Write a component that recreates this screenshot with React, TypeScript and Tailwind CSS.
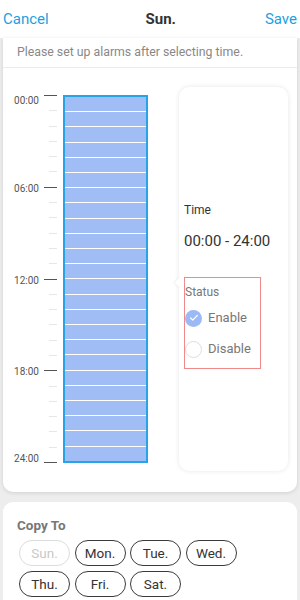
import { Check } from 'lucide-react'

const HOUR = 367 / 24
const days = ['Sun.', 'Mon.', 'Tue.', 'Wed.', 'Thu.', 'Fri.', 'Sat.']

function Axis() {
  const ticks = Array.from({ length: 25 }, (_, i) => i)
  return (
    <div className="relative w-[60px] h-[368px] shrink-0">
      {ticks.map((i) => {
        const major = i % 6 === 0
        const top = i * HOUR
        return (
          <div key={i}>
            <div
              className={major ? 'absolute left-[41px] w-[13px] h-px bg-[#555]' : 'absolute left-[46px] w-[8px] h-px bg-[#e6e6e6]'}
              style={{ top }}
            />
            {major && (
              <span
                className="absolute right-[24px] text-[10px] leading-[12px] text-[#555] -translate-y-1/2"
                style={{ top: top + (i === 0 ? 6 : i === 24 ? -3 : 2) }}
              >
                {String(i).padStart(2, '0')}:00
              </span>
            )}
          </div>
        )
      })}
    </div>
  )
}

export default function App() {
  return (
    <div className="w-[300px] h-[600px] overflow-hidden bg-[#ededed] font-['Roboto',sans-serif]">
      <div className="h-[38px] bg-white flex items-center justify-between px-[3px]">
        <span className="text-[15px] text-[#1d9fe2]">Cancel</span>
        <span className="text-[15px] font-bold text-[#333] ml-[8px]">Sun.</span>
        <span className="text-[15px] text-[#1d9fe2]">Save</span>
      </div>

      <div className="mx-[3px] bg-white rounded-b-[10px] shadow-[0_1px_4px_rgba(0,0,0,0.12)]">
        <div className="h-[30px] border-b border-[#ececec] pl-[14px] flex items-center text-[12.3px] text-[#888]">
          Please set up alarms after selecting time.
        </div>
        <div className="flex pt-[19px] pb-[21px]">
          <div className="flex pt-[8px]">
            <Axis />
            <div className="w-[85px] h-[368px] border-2 border-[#27a3e8] bg-[#a0bdf5] flex flex-col">
              {Array.from({ length: 24 }, (_, i) => (
                <div key={i} className={i === 0 ? 'flex-1' : 'flex-1 border-t border-white'} />
              ))}
            </div>
          </div>
          <div className="relative ml-[31px] w-[109px] h-[384px] bg-white rounded-[10px] shadow-[0_0_5px_rgba(0,0,0,0.1)] pl-[5px]">
            <div className="absolute left-[-3px] top-[192px] w-[7px] h-[7px] bg-white rotate-45 shadow-[-1px_1px_2px_rgba(0,0,0,0.06)]" />
            <div className="mt-[115px] text-[12px] leading-[16px] text-[#333]">Time</div>
            <div className="mt-[13px] text-[15px] leading-[20px] text-[#333]">00:00 - 24:00</div>
            <div className="mt-[26px] w-[77px] h-[92px] border border-[#f08a8a] pt-[6px] pb-[10px]">
              <div className="text-[12px] leading-[16px] text-[#777]">Status</div>
              <div className="mt-[8px] flex items-center gap-[6px] h-[20px]">
                <span className="w-[17px] h-[17px] rounded-full bg-[#9bb9f4] flex items-center justify-center">
                  <Check size={10} strokeWidth={3} color="white" />
                </span>
                <span className="text-[13px] text-[#777]">Enable</span>
              </div>
              <div className="mt-[11px] flex items-center gap-[6px] h-[20px]">
                <span className="w-[17px] h-[17px] rounded-full border border-[#dedede]" />
                <span className="text-[13px] text-[#777]">Disable</span>
              </div>
            </div>
          </div>
        </div>
      </div>

      <div className="mx-[3px] mt-[10px] bg-white rounded-t-[10px] pl-[14px] pt-[14px] h-[120px]">
        <div className="text-[13.5px] leading-[18px] font-bold text-[#777]">Copy To</div>
        <div className="mt-[6px] ml-[2px] flex flex-wrap gap-x-[4.5px] gap-y-[5px] w-[230px]">
          {days.map((d, i) => (
            <span
              key={d}
              className={
                i === 0
                  ? 'w-[51px] h-[26px] rounded-full border border-[#ddd] text-[#c8c8c8] text-[13.5px] flex items-center justify-center'
                  : 'w-[51px] h-[26px] rounded-full border-[1.3px] border-[#3a3a3a] text-[#333] text-[13.5px] flex items-center justify-center'
              }
            >
              {d}
            </span>
          ))}
        </div>
      </div>
    </div>
  )
}
